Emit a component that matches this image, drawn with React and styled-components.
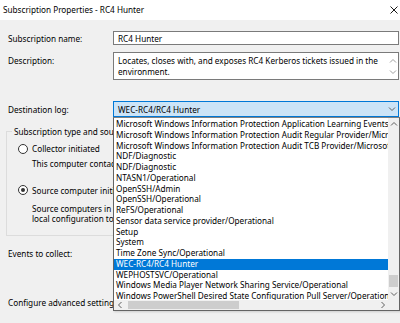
import React from 'react'
import styled, { createGlobalStyle } from 'styled-components'

const FONT = `"Noto Sans", "Open Sans", "Liberation Sans", sans-serif`

const logItems = [
  'Microsoft Windows Information Protection Application Learning Events',
  'Microsoft Windows Information Protection Audit Regular Provider/Microsoft-Windows-EDP-Audit-Regular',
  'Microsoft Windows Information Protection Audit TCB Provider/Microsoft-Windows-EDP-Audit-TCB',
  'NDF/Diagnostic',
  'NDF/Diagnostic',
  'NTASN1/Operational',
  'OpenSSH/Admin',
  'OpenSSH/Operational',
  'ReFS/Operational',
  'Sensor data service provider/Operational',
  'Setup',
  'System',
  'Time Zone Sync/Operational',
  'WEC-RC4/RC4 Hunter',
  'WEPHOSTSVC/Operational',
  'Windows Media Player Network Sharing Service/Operational',
  'Windows PowerShell Desired State Configuration Pull Server/Operational',
]

const SELECTED = 'WEC-RC4/RC4 Hunter'

const Chevron = ({ dir = 'down', color = '#606060' }) => {
  const paths = {
    down: 'M1 2.5 L4 5.5 L7 2.5',
    up: 'M1 5.5 L4 2.5 L7 5.5',
    left: 'M5.5 1 L2.5 4 L5.5 7',
    right: 'M2.5 1 L5.5 4 L2.5 7',
  }
  return (
    <svg width="8" height="8" viewBox="0 0 8 8">
      <path d={paths[dir]} fill="none" stroke={color} strokeWidth="1" />
    </svg>
  )
}

const App = () => {
  return (
    <>
      <GlobalStyle />
      <Window>
        <TitleBar>
          <span>Subscription Properties - RC4 Hunter</span>
          <svg width="8" height="8" viewBox="0 0 8 8">
            <path d="M0.5 0.5 L7.5 7.5 M7.5 0.5 L0.5 7.5" stroke="#000" strokeWidth="0.9" />
          </svg>
        </TitleBar>

        <Form>
          <Row $h={14}>
            <Label>Subscription name:</Label>
            <TextBox>RC4 Hunter</TextBox>
          </Row>

          <Row $h={28} $gap={7} $top>
            <Label $pad={3}>Description:</Label>
            <TextArea>
              <AreaText>
                Locates, closes with, and exposes RC4 Kerberos tickets issued in the
                <br />
                environment.
              </AreaText>
              <AreaScroll>
                <Chevron dir="up" color="#a0a0a0" />
                <Chevron dir="down" color="#a0a0a0" />
              </AreaScroll>
            </TextArea>
          </Row>

          <Row $h={16} $gap={21}>
            <Label>Destination log:</Label>
            <Combo>
              <span>{SELECTED}</span>
              <Chevron dir="down" />
            </Combo>
          </Row>

          <GroupBox>
            <Legend>Subscription type and source computers</Legend>
            <RadioRow $gap={6}>
              <Radio />
              <span>Collector initiated</span>
            </RadioRow>
            <Note $gap={5}>
              This computer contacts the selected source computers and provides the subscription.
            </Note>
            <RadioRow $gap={15}>
              <Radio $checked />
              <span>Source computer initiated</span>
            </RadioRow>
            <Note $gap={8}>
              Source computers in the selected groups must be configured through policy or
              <br />
              local configuration to contact this computer and receive the subscription.
            </Note>
          </GroupBox>

          <Plain $gap={12}>Events to collect:</Plain>
          <Plain $gap={38}>Configure advanced settings:</Plain>
        </Form>

        <DropList>
          <Items>
            {logItems.map((item, i) => (
              <Item key={i} $active={item === SELECTED}>
                {item}
              </Item>
            ))}
          </Items>
          <VScroll>
            <ScrollBtn $v>
              <Chevron dir="up" />
            </ScrollBtn>
            <VTrack>
              <VThumb />
            </VTrack>
            <ScrollBtn $v>
              <Chevron dir="down" />
            </ScrollBtn>
          </VScroll>
          <HScroll>
            <ScrollBtn>
              <Chevron dir="left" />
            </ScrollBtn>
            <HTrack>
              <HThumb />
            </HTrack>
            <ScrollBtn>
              <Chevron dir="right" />
            </ScrollBtn>
          </HScroll>
          <Corner />
        </DropList>
      </Window>
    </>
  )
}

export default App

const GlobalStyle = createGlobalStyle`
  html, body {
    margin: 0;
    padding: 0;
    background: #f0f0f0;
  }
`

const Window = styled.div`
  position: relative;
  width: 400px;
  height: 323px;
  overflow: hidden;
  background: #f0f0f0;
  font-family: ${FONT};
  font-size: 8.2px;
  line-height: 11px;
  color: #000;
`

const TitleBar = styled.div`
  height: 20px;
  background: #fff;
  display: flex;
  align-items: center;
  justify-content: space-between;
  padding: 0 2px 1px 3px;
  box-sizing: border-box;
`

const Form = styled.div`
  display: flex;
  flex-direction: column;
  padding: 11px 1px 0 8px;
`

const Row = styled.div`
  display: flex;
  align-items: ${(p) => (p.$top ? 'flex-start' : 'center')};
  height: ${(p) => p.$h}px;
  margin-top: ${(p) => p.$gap || 0}px;
`

const Label = styled.div`
  width: 105px;
  flex-shrink: 0;
  padding-top: ${(p) => p.$pad || 0}px;
`

const TextBox = styled.div`
  flex: 1;
  height: 100%;
  box-sizing: border-box;
  border: 1px solid #7a7a7a;
  background: #fff;
  padding-left: 4px;
  display: flex;
  align-items: center;
`

const TextArea = styled.div`
  flex: 1;
  height: 100%;
  box-sizing: border-box;
  border: 1px solid #7a7a7a;
  background: #fff;
  display: flex;
`

const AreaText = styled.div`
  flex: 1;
  padding: 3px 0 0 4px;
  line-height: 10.5px;
  white-space: nowrap;
`

const AreaScroll = styled.div`
  width: 11px;
  display: flex;
  flex-direction: column;
  align-items: center;
  padding-top: 4px;
  gap: 3px;
`

const Combo = styled.div`
  flex: 1;
  height: 100%;
  box-sizing: border-box;
  border: 1px solid #0078d7;
  background: #cce4f7;
  padding: 0 2px 0 4px;
  display: flex;
  align-items: center;
  justify-content: space-between;
`

const GroupBox = styled.div`
  margin: 14px 0 0 -2px;
  width: 388px;
  border: 1px solid #dcdcdc;
  padding: 0 0 10px 11px;
  display: flex;
  flex-direction: column;
`

const Legend = styled.div`
  align-self: flex-start;
  margin: -6px 0 0 -6px;
  padding: 0 2px;
  background: #f0f0f0;
  white-space: nowrap;
`

const RadioRow = styled.div`
  display: flex;
  align-items: center;
  gap: 4px;
  height: 11px;
  margin-top: ${(p) => p.$gap}px;
  white-space: nowrap;
`

const Radio = styled.span`
  width: 10px;
  height: 10px;
  box-sizing: border-box;
  border-radius: 50%;
  border: 1px solid #333;
  background: #fff;
  display: flex;
  align-items: center;
  justify-content: center;

  &::after {
    content: '';
    width: 4px;
    height: 4px;
    border-radius: 50%;
    background: #333;
    display: ${(p) => (p.$checked ? 'block' : 'none')};
  }
`

const Note = styled.div`
  margin: ${(p) => p.$gap}px 0 0 14px;
  line-height: 10.5px;
  white-space: nowrap;
`

const Plain = styled.div`
  margin-top: ${(p) => p.$gap}px;
  height: 11px;
  white-space: nowrap;
`

const DropList = styled.div`
  position: absolute;
  left: 113px;
  top: 117px;
  width: 287px;
  height: 194px;
  box-sizing: border-box;
  border: 1px solid #646464;
  border-top-color: #828282;
  background: #fff;
  display: grid;
  grid-template-columns: 1fr 11px;
  grid-template-rows: 1fr 10px;
  box-shadow: 1px 1px 2px rgba(0, 0, 0, 0.15);
`

const Items = styled.div`
  overflow: hidden;
  padding-top: 1px;
`

const Item = styled.div`
  height: 10.75px;
  line-height: 10.75px;
  padding-left: 2px;
  white-space: nowrap;
  background: ${(p) => (p.$active ? '#0078d7' : 'transparent')};
  color: ${(p) => (p.$active ? '#fff' : '#000')};
`

const VScroll = styled.div`
  background: #f0f0f0;
  display: flex;
  flex-direction: column;
`

const HScroll = styled.div`
  background: #f0f0f0;
  display: flex;
  align-items: stretch;
`

const ScrollBtn = styled.div`
  ${(p) => (p.$v ? 'height: 12px;' : 'width: 11px;')}
  display: flex;
  align-items: center;
  justify-content: center;
  flex-shrink: 0;
`

const VTrack = styled.div`
  flex: 1;
  display: flex;
  flex-direction: column;
  justify-content: flex-end;
  align-items: center;
  padding-bottom: 1px;
`

const VThumb = styled.div`
  width: 9px;
  height: 12px;
  background: #cdcdcd;
`

const HTrack = styled.div`
  flex: 1;
  display: flex;
  align-items: center;
  padding-left: 3px;
`

const HThumb = styled.div`
  width: 111px;
  height: 8px;
  background: #cdcdcd;
`

const Corner = styled.div`
  background: #f0f0f0;
`
